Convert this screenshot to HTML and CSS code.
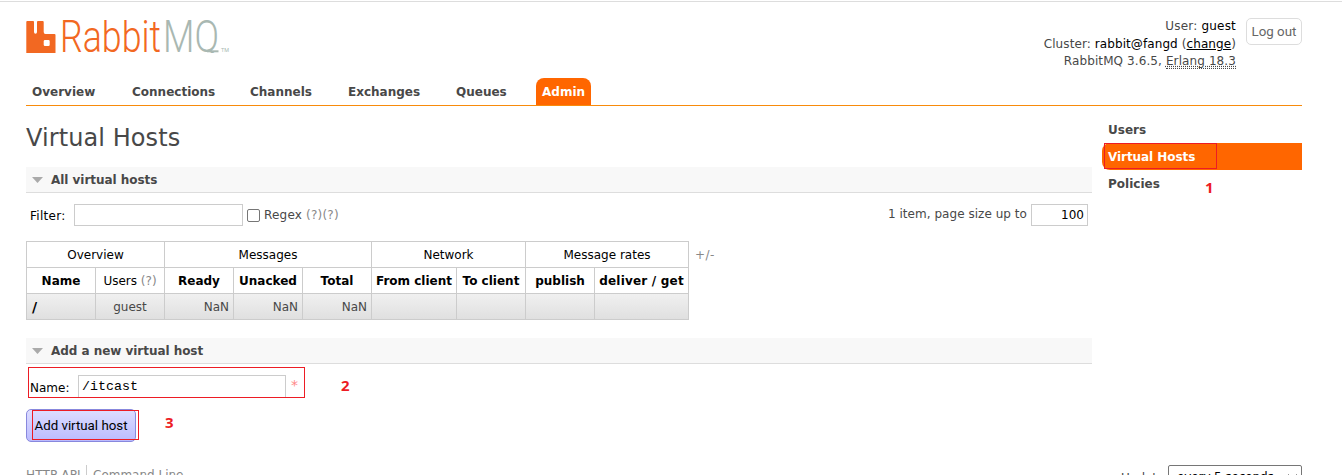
FILE: index.html
```html
<!DOCTYPE html>
<html lang="en">
<head>
<meta charset="utf-8">
<title>RabbitMQ Management</title>
<link rel="stylesheet" href="styles.css">
</head>
<body>
<div class="page">
  <header class="top">
    <svg class="logo" width="206" height="33" viewBox="0 0 206 33">
      <path fill="#f26822" fill-rule="evenodd" d="M1.200 1H7.200Q8 1 8 2V12Q8 13.700 9.500 13.700Q11 13.700 11 12V2Q11 1 12 1H16.700Q17.700 1 17.700 2V12Q17.700 14 19.500 14H28.500Q29.500 14 29.500 15V33H.300V2Q.300 1 1.200 1ZM19 20Q17.700 20 17.700 21.300V24.700Q17.700 26 19 26H22.500Q23.700 26 23.700 24.700V21.300Q23.700 20 22.500 20Z"/>
      <text class="logo-name orange" x="34" y="32" textLength="101" lengthAdjust="spacingAndGlyphs">Rabbit</text>
      <text class="logo-name gray" x="137" y="32" textLength="56" lengthAdjust="spacingAndGlyphs">MQ</text>
      <path d="M181 31.300H192.500" stroke="#a9b8b2" stroke-width="2"/>
      <text class="logo-tm" x="195" y="32" textLength="8" lengthAdjust="spacingAndGlyphs">TM</text>
    </svg>
    <div class="account">
      <ul class="info">
        <li class="user">User: <b>guest</b></li>
        <li class="cluster">Cluster: <b>rabbit@fangd</b> (<a>change</a>)</li>
        <li class="version">RabbitMQ 3.6.5, <span class="abbr">Erlang 18.3</span></li>
      </ul>
      <button class="logout">Log out</button>
    </div>
  </header>
  <nav class="tabs">
    <a>Overview</a><a>Connections</a><a>Channels</a><a>Exchanges</a><a>Queues</a><a class="selected">Admin</a>
  </nav>
  <div class="columns">
    <main class="main">
      <h1>Virtual Hosts</h1>
      <h2><svg width="11" height="6"><path d="M0 0H11L5.500 6Z" fill="#aaa"/></svg><span class="t-all">All virtual hosts</span></h2>
      <div class="filter">
        <label class="filter-label">Filter:</label>
        <span class="box filter-input"></span>
        <span class="check"></span>
        <span class="regex">Regex <i>(?)(?)</i></span>
        <span class="paging">1 item, page size up to</span>
        <span class="box size">100</span>
      </div>
      <div class="table-row">
        <table>
          <colgroup><col class="w69"><col class="w69"><col class="w69"><col class="w69"><col class="w69"><col class="w85"><col class="w69"><col class="w69"><col class="w94"></colgroup>
          <tr class="groups"><th colspan="2">Overview</th><th colspan="3">Messages</th><th colspan="2">Network</th><th colspan="2">Message rates</th></tr>
          <tr class="heads"><th>Name</th><th class="plain">Users <i>(?)</i></th><th>Ready</th><th>Unacked</th><th>Total</th><th>From client</th><th>To client</th><th>publish</th><th class="deliver">deliver / get</th></tr>
          <tr class="data"><td class="name">/</td><td class="center">guest</td><td>NaN</td><td>NaN</td><td>NaN</td><td></td><td></td><td></td><td></td></tr>
        </table>
        <span class="plus">+/-</span>
      </div>
      <h2><svg width="11" height="6"><path d="M0 0H11L5.500 6Z" fill="#aaa"/></svg><span class="t-add">Add a new virtual host</span></h2>
      <div class="name-row">
        <label>Name:</label>
        <span class="box name-input">/itcast</span>
        <span class="required">*</span>
      </div>
      <button class="add">Add virtual host</button>
    </main>
    <aside class="side">
      <a>Users</a><a class="selected">Virtual Hosts</a><a>Policies</a>
    </aside>
  </div>
  <footer class="footer">
    <span class="link first">HTTP API</span><span class="link second">Command Line</span>
    <span class="update">Update</span>
    <span class="select"><span class="every">every 5 seconds</span><svg width="9" height="6"><path d="M.5 .5L4.500 4.500L8.500 .5" fill="none" stroke="#333"/></svg></span>
  </footer>
</div>
<div class="mark mark1"></div><div class="num num1">1</div>
<div class="mark mark2"></div><div class="num num2">2</div>
<div class="mark mark3"></div><div class="num num3">3</div>
</body>
</html>
```
FILE: styles.css
```css
* { box-sizing: border-box; }
html { overflow: hidden; }
body {
  margin: 0;
  height: 475px;
  overflow: hidden;
  position: relative;
  background: #fff;
  color: #484848;
  font: 12px/17px "DejaVu Sans", Verdana, sans-serif;
}
i { font-style: normal; color: #888; }
.page { margin-top: 1px; border-top: 1px solid #ddd; padding: 0 40px 0 26px; }
.top { height: 76px; display: flex; justify-content: space-between; align-items: flex-start; }
.logo { margin-top: 18px; overflow: hidden; }
.logo-name { font: 300 45px Roboto, sans-serif; }
.orange { fill: #f26822; }
.gray { fill: #a9b8b2; }
.logo-tm { font: 6px Roboto, sans-serif; fill: #a9b8b2; }
.account { display: flex; gap: 10px; padding-top: 16px; }
.info { list-style: none; margin: 0; padding: 0; text-align: right; }
.info li { height: 17.5px; line-height: 17px; }
.info .user { letter-spacing: .2px; }
.info .cluster { letter-spacing: .09px; }
.info .version { letter-spacing: .1px; }
.info b { font-weight: normal; color: #000; }
.info a { color: #000; text-decoration: underline; }
.abbr { display: inline-block; line-height: 14px; border-bottom: 1px dotted #484848; text-decoration: underline dotted; }
.logout {
  width: 56px; height: 27px; padding: 0;
  border: 1px solid #ddd; border-radius: 5px;
  background: #fff; color: #666;
  font: 13.3px/24px Roboto, sans-serif;
}
.tabs {
  height: 28px; border-bottom: 1px solid #f88b0b;
  display: grid; grid-template-columns: 76px 94px 74px 84px 62px 55px; gap: 24px;
  font-weight: bold;
}
.tabs a { padding-left: 6px; line-height: 29px; white-space: nowrap; height: 27px; }
.tabs .selected { background: #f60; color: #fff; border-radius: 8px 8px 0 0; }
.columns { display: flex; gap: 10px; height: 359px; }
.main { width: 1066px; }
h1 { margin: 0; height: 61px; padding-top: 17px; font-size: 24px; line-height: 30px; font-weight: normal; white-space: nowrap; letter-spacing: .08px; }
h2 {
  margin: 0; height: 26px; padding-left: 6px;
  display: flex; align-items: center; gap: 8px;
  background: #f8f8f8; border-bottom: 1px solid #ddd;
  font-size: 12px; line-height: 25px; white-space: nowrap;
}
h2 span { padding-top: 2px; letter-spacing: -.04px; }
.box { border: 1px solid #ccc; background: #fff; color: #000; height: 22px; line-height: 20px; }
.filter { display: flex; height: 48px; padding: 11px 4px 0; align-items: flex-start; white-space: nowrap; }
.filter-label { width: 44px; color: #000; line-height: 24px; letter-spacing: .3px; }
.filter-input { width: 169px; }
.check { width: 13px; height: 13px; margin: 5px 4px 0; border: 1px solid #767676; border-radius: 2px; }
.regex { line-height: 22px; letter-spacing: .2px; }
.paging { margin-left: auto; margin-right: 4px; line-height: 21px; letter-spacing: .04px; }
.size { width: 57px; text-align: right; padding-right: 3px; }
.table-row { display: flex; height: 97px; gap: 6px; }
table { border-collapse: collapse; table-layout: fixed; width: 663px; height: 79px; }
.w69 { width: 69px; } .w85 { width: 85px; } .w94 { width: 94px; }
tr { height: 26px; }
th, td { border: 1px solid #ccc; padding: 2px 0 0; height: 26px; white-space: nowrap; line-height: 17px; }
th { color: #000; }
.groups th, .heads .plain { font-weight: normal; }
.heads .deliver { letter-spacing: .2px; }
.data { background: linear-gradient(#f0f0f0, #dfdfdf); }
.data td { text-align: right; padding-right: 4px; }
.data .name { text-align: left; padding-left: 5px; font-size: 14px; font-weight: bold; color: #000; }
.data .center { text-align: center; padding-right: 0; }
.plus { color: #888; line-height: 28px; letter-spacing: .4px; }
.name-row { display: flex; height: 45px; padding: 11px 4px 0; color: #000; }
.name-row label { width: 48px; line-height: 26px; }
.name-input { width: 208px; height: 23px; padding-left: 3px; font: 13.3px/22px "Liberation Mono", monospace; }
.required { margin-left: 5px; color: #f88; line-height: 20px; font-size: 14px; }
.add {
  width: 110px; height: 33px; padding: 0;
  border: 1px solid #88d; border-radius: 5px;
  background: linear-gradient(#ddf, #bbf); color: #000;
  font: 13.3px/30px Roboto, sans-serif;
}
.side { width: 200px; padding-top: 10px; display: flex; flex-direction: column; font-weight: bold; }
.side a { height: 27px; line-height: 29px; padding-left: 6px; }
.side .selected { background: #f60; color: #fff; border-radius: 8px 0 0 8px; letter-spacing: -.06px; }
.footer { display: flex; align-items: flex-start; color: #888; white-space: nowrap; }
.link { height: 20px; line-height: 20px; }
.first { width: 61px; border-right: 1px solid #ccc; letter-spacing: .15px; }
.second { padding-left: 6px; }
.update { margin-left: auto; width: 47px; line-height: 26px; color: #484848; }
.select { width: 134px; height: 24px; padding: 0 4px 0 8px; border: 1px solid #767676; border-radius: 2px; color: #000; line-height: 22px; display: flex; align-items: center; justify-content: space-between; }
.every { letter-spacing: -.1px; }
.mark { position: absolute; border: 1px solid #ed1c24; }
.mark1 { left: 1104px; top: 143px; width: 113px; height: 26px; }
.mark2 { left: 28px; top: 367px; width: 277px; height: 31px; }
.mark3 { left: 32px; top: 410px; width: 107px; height: 30px; }
.num { position: absolute; color: #ed1c24; font: bold 15px/20px "Noto Sans", sans-serif; }
.num1 { left: 1205px; top: 177px; }
.num2 { left: 341px; top: 375px; }
.num3 { left: 165px; top: 412px; }
```
